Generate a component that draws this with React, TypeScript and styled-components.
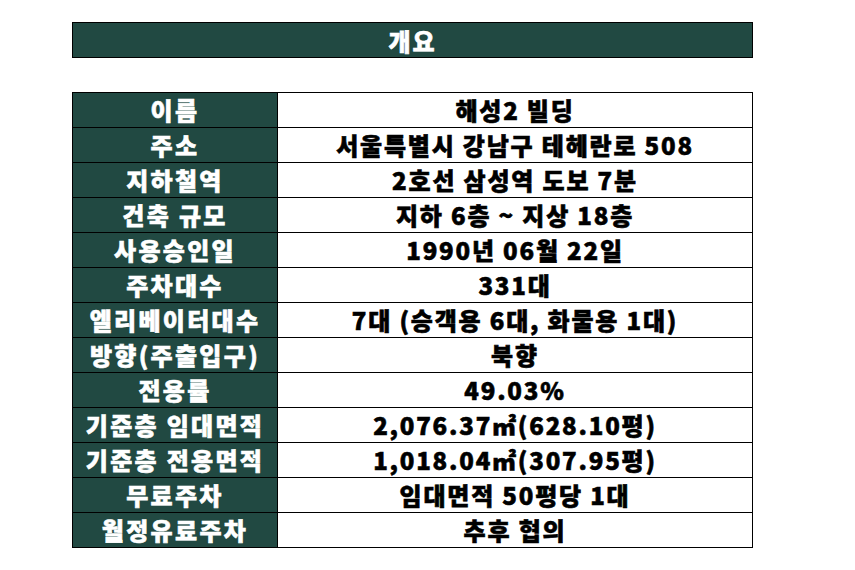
import React from "react";
import styled, { createGlobalStyle } from "styled-components";

const GlobalStyle = createGlobalStyle`
  body {
    margin: 0;
    background: #ffffff;
    font-family: "Noto Sans CJK KR", "Noto Sans", sans-serif;
  }
`;

const Page = styled.div`
  width: 855px;
  height: 570px;
  padding: 22px 0 0 72px;
  box-sizing: border-box;
`;

const TitleBar = styled.div`
  width: 681px;
  height: 36px;
  box-sizing: border-box;
  background: #214942;
  border: 1px solid #000;
  color: #fff;
  font-size: 24px;
  font-weight: 900;
  -webkit-text-stroke: 0.6px #fff;
  letter-spacing: 2px;
  display: flex;
  align-items: center;
  justify-content: center;
`;

const Table = styled.table`
  margin-top: 34px;
  width: 681px;
  border-collapse: collapse;
  table-layout: fixed;
`;

const Row = styled.tr`
  height: 35px;
`;

const Cell = styled.td<{ $head?: boolean }>`
  background: ${(p) => (p.$head ? "#214942" : "#fff")};
  color: ${(p) => (p.$head ? "#fff" : "#000")};
  -webkit-text-stroke: 0.6px ${(p) => (p.$head ? "#fff" : "#000")};
  width: ${(p) => (p.$head ? "204px" : "auto")};
  letter-spacing: ${(p) => (p.$head ? "2.3px" : "1.8px")};
  border: 1px solid #000;
  text-align: center;
  font-size: 24px;
  font-weight: 900;
  padding: 0;
  line-height: 1;
  white-space: nowrap;
`;

const rows: [string, string][] = [
  ["이름", "해성2 빌딩"],
  ["주소", "서울특별시 강남구 테헤란로 508"],
  ["지하철역", "2호선 삼성역 도보 7분"],
  ["건축 규모", "지하 6층 ~ 지상 18층"],
  ["사용승인일", "1990년 06월 22일"],
  ["주차대수", "331대"],
  ["엘리베이터대수", "7대 (승객용 6대, 화물용 1대)"],
  ["방향(주출입구)", "북향"],
  ["전용률", "49.03%"],
  ["기준층 임대면적", "2,076.37㎡(628.10평)"],
  ["기준층 전용면적", "1,018.04㎡(307.95평)"],
  ["무료주차", "임대면적 50평당 1대"],
  ["월정유료주차", "추후 협의"],
];

export default function App() {
  return (
    <>
      <GlobalStyle />
      <Page>
        <TitleBar>개요</TitleBar>
        <Table>
          <tbody>
            {rows.map(([k, v]) => (
              <Row key={k}>
                <Cell $head>{k}</Cell>
                <Cell>{v}</Cell>
              </Row>
            ))}
          </tbody>
        </Table>
      </Page>
    </>
  );
}
